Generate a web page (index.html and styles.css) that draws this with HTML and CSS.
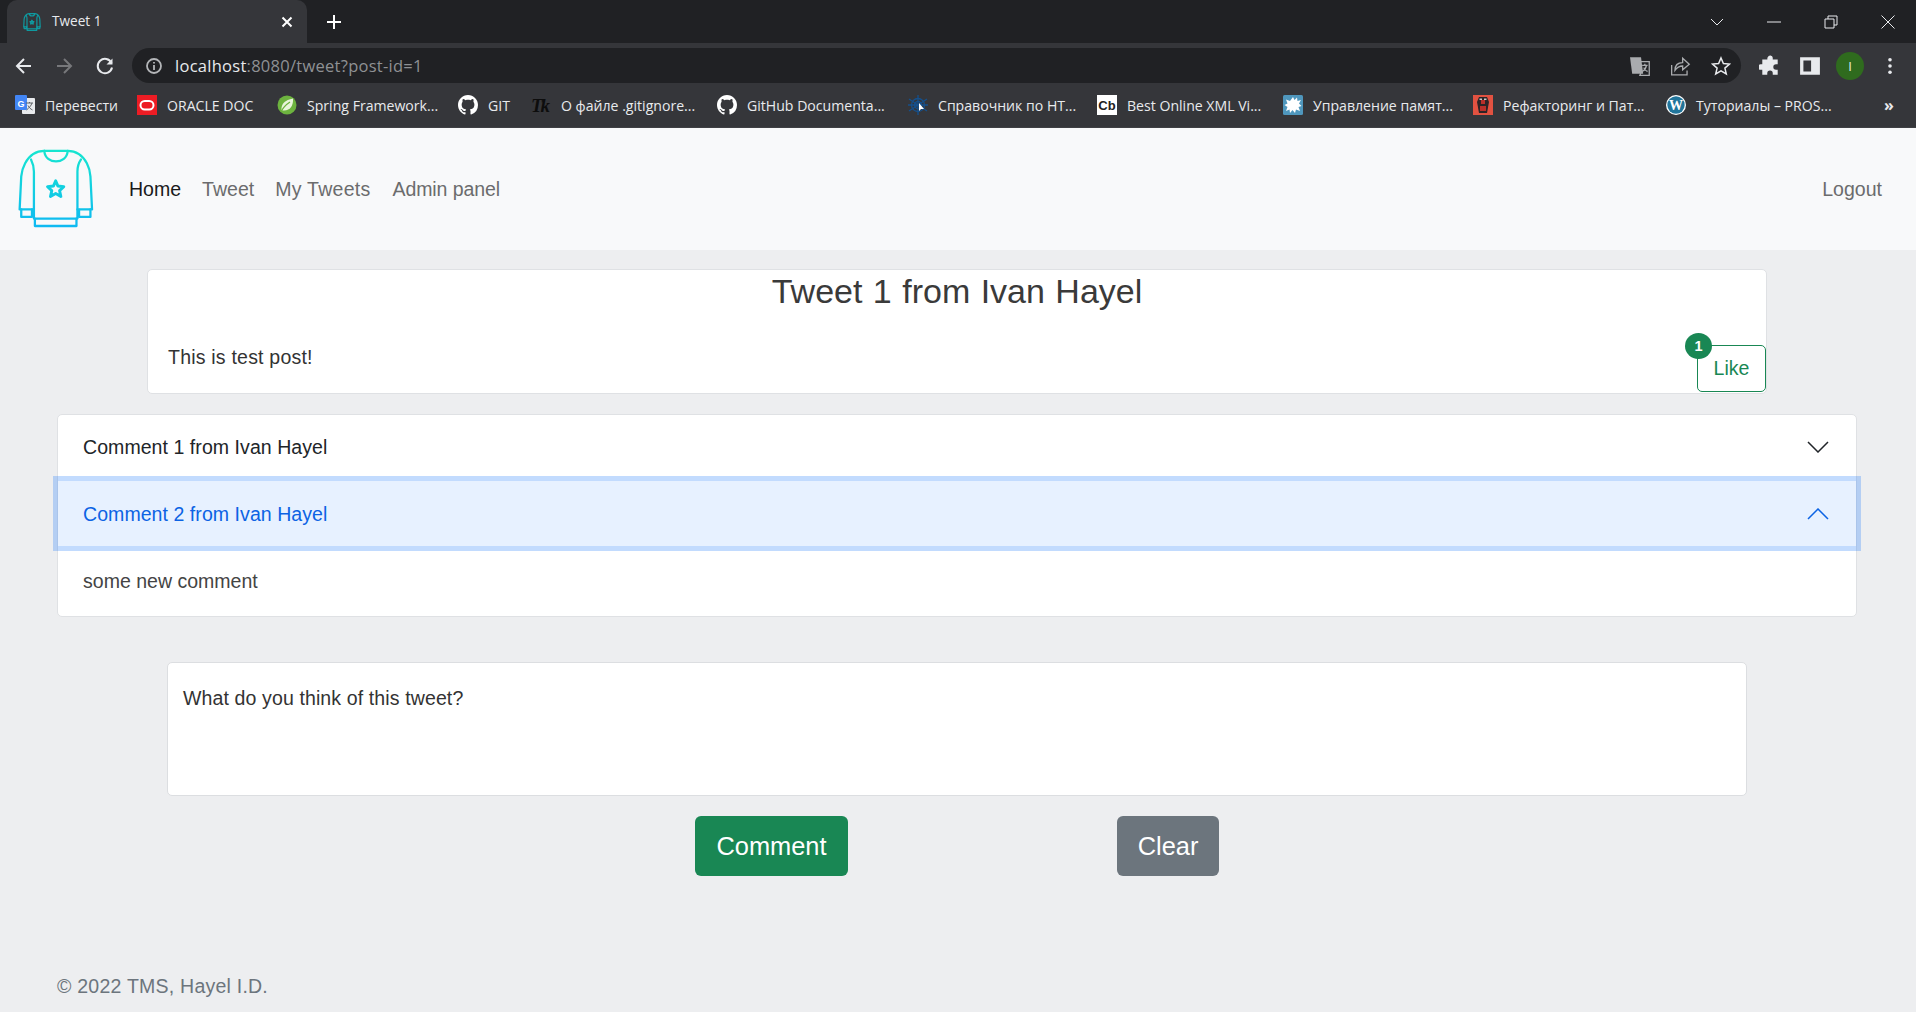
FILE: index.html
```html
<!DOCTYPE html>
<html lang="en">
<head>
<meta charset="utf-8">
<title>Tweet 1</title>
<link rel="stylesheet" href="styles.css">
</head>
<body>
<svg class="defs" width="0" height="0" aria-hidden="true">
  <defs>
    <linearGradient id="sweaterGrad" gradientUnits="userSpaceOnUse" x1="0" y1="55" x2="0" y2="297">
      <stop offset="0" stop-color="#16e6cf"/>
      <stop offset="1" stop-color="#0fb9f2"/>
    </linearGradient>
    <symbol id="sweater" viewBox="52 54 234 244">
      <g fill="none" stroke-linejoin="round" stroke-linecap="round">
        <path d="M133 62H205C235 62 252 78 264 100C272 115 274 128 275 140L280 242H243"/>
        <path d="M133 62C103 62 86 78 74 100C66 115 63 128 62 140L57 242H95"/>
        <path d="M133 62C136 105 202 105 205 62"/>
        <path d="M92 88C98 100 101 112 101 125V270H235V125C235 112 238 100 246 88"/>
        <path d="M62 242V265H95M101 242H95V265M275 242V265H240M235 242H240V265"/>
        <path d="M104 270V293H232V270"/>
        <path class="star" d="M168 154L175 170L193 172L180 184L184 202L168 193L152 202L156 184L143 172L161 170Z"/>
      </g>
    </symbol>
    <symbol id="octo" viewBox="0 0 16 16">
      <path fill="#fff" d="M8 0C3.58 0 0 3.58 0 8c0 3.54 2.29 6.53 5.47 7.59.4.07.55-.17.55-.38 0-.19-.01-.82-.01-1.49-2.01.37-2.53-.49-2.69-.94-.09-.23-.48-.94-.82-1.13-.28-.15-.68-.52-.01-.53.63-.01 1.08.58 1.23.82.72 1.21 1.87.87 2.33.66.07-.52.28-.87.51-1.07-1.78-.2-3.64-.89-3.64-3.95 0-.87.31-1.59.82-2.15-.08-.2-.36-1.02.08-2.12 0 0 .67-.21 2.2.82.64-.18 1.32-.27 2-.27.68 0 1.36.09 2 .27 1.53-1.04 2.2-.82 2.2-.82.44 1.1.16 1.92.08 2.12.51.56.82 1.27.82 2.15 0 3.07-1.87 3.75-3.65 3.95.29.25.54.73.54 1.48 0 1.07-.01 1.93-.01 2.2 0 .21.15.46.55.38A8.013 8.013 0 0016 8c0-4.42-3.58-8-8-8z"/>
    </symbol>
  </defs>
</svg>

<header class="browser">
  <div class="tabstrip">
    <div class="tab">
      <svg class="favicon" viewBox="0 0 18 18" stroke="#0f9aa0"><use href="#sweater"/></svg>
      <span class="tab-title">Tweet 1</span>
      <svg class="tab-close" viewBox="0 0 12 12"><path d="M1.5 1.5L10.5 10.5M10.5 1.5L1.5 10.5"/></svg>
    </div>
    <svg class="newtab" viewBox="0 0 16 16"><path d="M8 1V15M1 8H15"/></svg>
    <div class="winctl">
      <svg class="win" viewBox="0 0 16 16"><path d="M2 5L8 11L14 5"/></svg>
      <svg class="win" viewBox="0 0 16 16"><path d="M1 8H15"/></svg>
      <svg class="win" viewBox="0 0 16 16"><path d="M2 5H11V14H2ZM5 5V2H14V11H11"/></svg>
      <svg class="win" viewBox="0 0 16 16"><path d="M1.5 1.5L14.5 14.5M14.5 1.5L1.5 14.5"/></svg>
    </div>
  </div>
  <div class="toolbar">
    <div class="navbtns">
      <span class="tbtn"><svg class="ico" viewBox="0 0 20 20"><path d="M17 10H3.5M10 3L3 10L10 17"/></svg></span>
      <span class="tbtn"><svg class="ico dim" viewBox="0 0 20 20"><path d="M3 10H16.5M10 3L17 10L10 17"/></svg></span>
      <span class="tbtn"><svg class="ico" viewBox="-1 0 20 20"><path d="M16.5 7A7.2 7.2 0 1 0 17 11.5"/><path class="solid" d="M17.5 2.5V8.5H11.5Z"/></svg></span>
    </div>
    <div class="omnibox">
      <svg class="info" viewBox="0 0 20 20"><circle cx="10" cy="10" r="7"/><path d="M10 9V14M10 6V7.5"/></svg>
      <span class="url"><span class="url-host">localhost</span>:8080/tweet?post-id=1</span>
      <div class="omni-actions">
        <span class="tbtn"><svg class="ico-thin" viewBox="1 0 20 20"><path class="grey" d="M1 2H11L13 17H3Z"/><path d="M9 6H18.5V18.5H10L11 16"/><path d="M12 9.5H17M14.5 8V9.5M16 9.5C15.5 12 14 14 12 15M13.5 11.5C14 13 15.5 14.5 17 15"/></svg></span>
        <span class="tbtn"><svg class="ico-thin" viewBox="1.500 0 20 20"><path d="M3 9V18H17V14"/><path d="M6 14C6 9 9 7 13 7V3L19 8.5L13 13.5V10C10 10 8 11 6 14Z"/></svg></span>
        <span class="tbtn"><svg class="ico star-ico" viewBox="0 0 20 20"><path d="M10 2L12.4 7.6L18.5 8.1L13.9 12.1L15.3 18L10 14.9L4.7 18L6.1 12.1L1.5 8.1L7.6 7.6Z"/></svg></span>
      </div>
    </div>
    <div class="tool-right">
      <span class="tbtn"><svg class="ico-fill" viewBox="0 0 20 20"><path d="M8 2A2.3 2.3 0 0 1 12.500 2.500V4H17V8.500H15.500A2.500 2.500 0 0 0 15.500 13.500H17V18H12.500V16.500A2.500 2.500 0 0 0 7.500 16.500V18H3V13.500H1.500A2.500 2.500 0 0 1 1.500 8.500H3V4H7.600V2.500Z"/></svg></span>
      <span class="tbtn"><svg class="ico-fill" viewBox="0 0 20 20"><path fill-rule="evenodd" d="M1 2H19V18H1ZM4 5V15H11V5Z"/></svg></span>
      <span class="tbtn"><span class="avatar">I</span></span>
      <span class="tbtn"><svg class="ico-fill dots" viewBox="0 0 20 20"><circle cx="10" cy="3" r="2"/><circle cx="10" cy="10" r="2"/><circle cx="10" cy="17" r="2"/></svg></span>
    </div>
  </div>
  <nav class="bookmarks">
    <a class="bm b1">
      <svg class="bm-ico" viewBox="0 0 20 20"><rect x="7" y="3" width="13" height="16" rx="1" fill="#e8eaed"/><rect x="0" y="0" width="12" height="15" rx="1" fill="#4285f4"/><text x="6" y="11.500" class="ic-g">G</text><path d="M11 8H18M14.500 7V8M17 8C16 11 14 13 11.500 15M13 10.500C14 12.500 15.500 14 17.500 15" stroke="#5f6368" fill="none"/></svg>
      <span>Перевести</span></a>
    <a class="bm b2">
      <svg class="bm-ico" viewBox="0 0 20 20"><rect width="20" height="20" fill="#ed1c24"/><rect x="3.500" y="6" width="13" height="8.500" rx="4.250" fill="none" stroke="#fff" stroke-width="2"/></svg>
      <span>ORACLE DOC</span></a>
    <a class="bm b3">
      <svg class="bm-ico" viewBox="0 0 20 20"><circle cx="10" cy="10" r="9.500" fill="#6db33f"/><path d="M4.500 15C4 9 8 5 16 3.500C16.500 10 13.500 15.500 7 15.500C6 15.500 5 15.500 4.500 15Z" fill="#e9f5dc"/><path d="M4.500 16C7 11 10 9 13 7" stroke="#6db33f" stroke-width="1.300" fill="none"/></svg>
      <span>Spring Framework...</span></a>
    <a class="bm b4"><svg class="bm-ico" viewBox="0 0 16 16"><use href="#octo"/></svg><span>GIT</span></a>
    <a class="bm b5">
      <svg class="bm-ico" viewBox="0 0 20 20"><text x="0" y="17" class="ic-tk">Tk</text></svg>
      <span>О файле .gitignore...</span></a>
    <a class="bm b6"><svg class="bm-ico" viewBox="0 0 16 16"><use href="#octo"/></svg><span>GitHub Documenta...</span></a>
    <a class="bm b7">
      <svg class="bm-ico" viewBox="0 0 20 20"><g stroke="#15508c" stroke-width="1.300" fill="none"><path d="M10 0V20M1 4L19 16M19 4L1 16M0 10H20"/><circle cx="10" cy="10" r="3.500"/><circle cx="10" cy="10" r="6.500"/></g><path d="M11 8L11 16L13 14H16Z" fill="#fff"/></svg>
      <span>Справочник по HT...</span></a>
    <a class="bm b8">
      <svg class="bm-ico" viewBox="0 0 20 20"><rect width="20" height="20" fill="#fff"/><text x="10" y="14.500" class="ic-cb">Cb</text></svg>
      <span>Best Online XML Vi...</span></a>
    <a class="bm b9">
      <svg class="bm-ico" viewBox="0 0 20 20"><rect width="20" height="20" rx="1.500" fill="#4f97bd"/><path d="M10 2L11.500 5L14 2.500L14.500 6L18 5L16 8.500L18.500 11L15.500 12L17 16L13 14.500L12 18L9.500 15L7 18L6.500 14.500L3 16L4.500 12L1.500 10L4.500 8.500L3 4.500L7 6Z" fill="#fff"/></svg>
      <span>Управление памят...</span></a>
    <a class="bm b10">
      <svg class="bm-ico" viewBox="0 0 20 20"><rect width="20" height="20" fill="#e25241"/><path d="M6 2H14L16 7L14 18H6L4 7Z" fill="#2d2426"/><path d="M8 5H12V9H8ZM7 11H13V16H7Z" fill="#b9302a"/><path d="M6.500 3.500H9V5H6.500ZM11 3.500H13.500V5H11Z" fill="#ccc"/></svg>
      <span>Рефакторинг и Пат...</span></a>
    <a class="bm b11">
      <svg class="bm-ico" viewBox="0 0 20 20"><circle cx="10" cy="10" r="10" fill="#fff"/><circle cx="10" cy="10" r="8.700" fill="#21759b"/><text x="10" y="15" class="ic-wp">W</text></svg>
      <span>Туториалы – PROS...</span></a>
    <span class="bm-more">»</span>
  </nav>
</header>

<div class="navbar">
  <svg class="brand" viewBox="0 0 76 80" stroke="url(#sweaterGrad)"><use href="#sweater"/></svg>
  <a class="nav-link active">Home</a>
  <a class="nav-link">Tweet</a>
  <a class="nav-link link-tweets">My Tweets</a>
  <a class="nav-link link-admin">Admin panel</a>
  <a class="nav-link logout">Logout</a>
</div>

<main class="container">
  <section class="tweet-card">
    <h1 class="tweet-title">Tweet 1 from Ivan Hayel</h1>
    <div class="tweet-row">
      <p class="tweet-text">This is test post!</p>
      <button class="like-btn">Like<span class="badge">1</span></button>
    </div>
  </section>

  <section class="accordion">
    <div class="acc-header">
      <span>Comment 1 from Ivan Hayel</span>
      <svg class="chev" viewBox="0 0 22 12"><path d="M1 1L11 11L21 1"/></svg>
    </div>
    <div class="acc-header open">
      <span>Comment 2 from Ivan Hayel</span>
      <svg class="chev" viewBox="0 0 22 12"><path d="M1 11L11 1L21 11"/></svg>
    </div>
    <div class="acc-body">some new comment</div>
  </section>

  <textarea class="comment-box" placeholder="What do you think of this tweet?"></textarea>

  <div class="actions">
    <button class="btn btn-green">Comment</button>
    <button class="btn btn-grey">Clear</button>
  </div>

  <footer class="footer">© 2022 TMS, Hayel I.D.</footer>
</main>
</body>
</html>
```
FILE: styles.css
```css
* { box-sizing: border-box; }
html, body { margin: 0; padding: 0; }
body {
  width: 1916px;
  height: 1012px;
  overflow: hidden;
  background: #edeef0;
  font-family: "Liberation Sans", Arial, sans-serif;
  font-size: 19.55px;
  color: #212529;
}
.defs { position: absolute; }

/* browser chrome */
.browser { font-family: "Open Sans", "Noto Sans", sans-serif; color: #e8eaed; }
.tabstrip { height: 43px; background: #202124; display: flex; align-items: center; }
.tab {
  width: 300px; height: 43px; margin-left: 7px;
  background: #35363a; border-radius: 10px 10px 0 0;
  display: flex; align-items: center; padding-left: 16px;
}
.favicon { width: 18px; height: 18px; flex: none; stroke-width: 16; --star-w: 20; }
.tab-title { margin-left: 11px; margin-top: -2px; font-size: 13.600px; flex: 1; }
.tab-close { width: 12px; height: 12px; margin-right: 14px; fill: none; stroke: #fff; stroke-width: 2; }
.newtab { width: 16px; height: 16px; margin-left: 19px; fill: none; stroke: #fff; stroke-width: 2; }
.winctl { margin-left: auto; display: flex; gap: 41px; padding-right: 20px; }
.win { width: 16px; height: 16px; fill: none; stroke: #e8eaed; stroke-width: 1; }

.toolbar { height: 40px; padding-top: 5px; background: #35363a; display: flex; align-items: stretch; }
.navbtns { display: flex; margin-left: 4px; width: 122px; }
.tbtn { width: 40px; display: flex; align-items: center; justify-content: center; flex: none; }
.ico { width: 20px; height: 20px; fill: none; stroke: #e8eaed; stroke-width: 2; }
.ico.dim { stroke: #77787b; }
.ico.star-ico { stroke-width: 1.500; }
.solid { fill: #e8eaed; stroke: none; }
.ico-thin { width: 22px; height: 22px; fill: none; stroke: #a9abae; stroke-width: 1.200; }
.grey { fill: #a9abae; stroke: none; }
.ico-fill { width: 22px; height: 22px; fill: #e8eaed; }
.ico-fill.dots { width: 18px; height: 18px; }
.omnibox {
  width: 1609px; margin-left: 6px; height: 35px;
  background: #202124; border-radius: 18px;
  display: flex; align-items: center; padding-left: 12px;
}
.info { width: 20px; height: 20px; fill: none; stroke: #b4b6b9; stroke-width: 1.800; flex: none; }
.url { margin-left: 11px; font-size: 16.500px; color: #8f9194; letter-spacing: 0.270px; }
.url-host { color: #e8eaed; }
.omni-actions { margin-left: auto; display: flex; }
.tool-right { display: flex; margin-left: 9px; }
.avatar {
  width: 28px; height: 28px; border-radius: 50%;
  background: #2f6b1e; color: #e8eaed; font-size: 13px;
  display: flex; align-items: center; justify-content: center;
}

.bookmarks { height: 45px; background: #35363a; display: flex; align-items: center; padding-left: 15px; font-size: 14.100px; border-bottom: 1px solid #3f4044; }
.bm { display: flex; align-items: center; gap: 10px; white-space: nowrap; flex: none; }
.bm-ico { width: 20px; height: 20px; flex: none; overflow: hidden; }
.b1 { width: 122px; } .b2 { width: 140px; } .b3 { width: 181px; } .b4 { width: 73px; }
.b5 { width: 186px; } .b6 { width: 191px; } .b7 { width: 189px; } .b8 { width: 186px; }
.b9 { width: 190px; } .b10 { width: 193px; } .b11 { width: 219px; }
.bm-more { font-size: 16px; font-weight: 700; margin-left: -1px; }
.ic-g { font: 700 9px "Liberation Sans", sans-serif; fill: #fff; text-anchor: middle; }
.ic-tk { font: italic 700 19px "Liberation Serif", serif; fill: #0d0d0d; letter-spacing: -2px; }
.ic-cb { font: 700 13px "Liberation Sans", sans-serif; fill: #222; text-anchor: middle; }
.ic-wp { font: 700 14px "Liberation Serif", serif; fill: #fff; text-anchor: middle; }

/* navbar */
.navbar {
  height: 122px; background: #f8f9fa;
  display: flex; align-items: center; padding: 0 34px 0 18px; gap: 21px;
}
.brand { width: 76px; height: 80px; margin-right: 14px; margin-top: -2px; stroke-width: 7; --star-w: 9; }
.star { stroke-width: var(--star-w); }
.nav-link { color: #6b6c6d; }
.nav-link.active { color: #1a1a1a; }
.link-tweets { letter-spacing: .25px; }
.link-admin { letter-spacing: -.1px; margin-left: 1px; }
.logout { margin-left: auto; }

/* content */
.container { width: 1800px; margin-left: 57px; }
.tweet-card {
  width: 1620px; height: 125px; margin: 19px auto 0;
  background: #fff; border: 1px solid #dfe1e4; border-radius: 5px;
}
.tweet-title { margin: 0; height: 43px; font-size: 34px; line-height: 43px; font-weight: 400; text-align: center; color: #3a3a3a; letter-spacing: 0; word-spacing: 1px; }
.tweet-row { margin-top: 32px; padding-left: 20px; display: flex; justify-content: space-between; align-items: flex-start; }
.tweet-text { margin: 1px 0 0; line-height: 23px; color: #333; letter-spacing: .2px; }
.like-btn {
  position: relative; width: 69px; height: 47px;
  background: #fff; border: 1px solid #198754; border-radius: 5px;
  color: #198754; font: inherit; padding: 0;
}
.badge {
  position: absolute; left: -13px; top: -13px;
  width: 27px; height: 26px; border-radius: 50%;
  background: #198754; color: #fff; font-size: 14.500px; font-weight: 700;
  display: flex; align-items: center; justify-content: center;
}

.accordion {
  margin-top: 20px; height: 203px;
  background: #fff; border: 1px solid #dfe1e4; border-radius: 5px;
}
.acc-header {
  height: 65px; padding: 0 27px 0 25px;
  display: flex; align-items: center; justify-content: space-between;
  color: #212529; position: relative; letter-spacing: .05px;
}
.acc-header.open {
  margin-top: 1px; padding-top: 1px;
  background: #e7f1ff; color: #0c63e4;
  box-shadow: 0 0 0 5px rgba(13, 110, 253, .25);
}
.chev { width: 22px; height: 12px; fill: none; stroke: #212529; stroke-width: 1.500; margin-top: -1px; }
.open .chev { stroke: #0c63e4; }
.acc-body { height: 70px; padding-left: 25px; display: flex; align-items: center; color: #444; }

.comment-box {
  display: block; width: 1580px; height: 134px; margin: 45px auto 0;
  padding: 21px 15px; border: 1px solid #dcdee1; border-radius: 5px;
  background: #fff; font: inherit; line-height: 29px; resize: none; outline: none; letter-spacing: .11px;
}
.comment-box::placeholder { color: #333; opacity: 1; }
.actions { margin-top: 20px; display: flex; justify-content: center; gap: 269px; }
.btn { height: 60px; border: 0; border-radius: 6px; color: #fff; font: 25.400px "Liberation Sans", sans-serif; padding: 0; }
.btn-green { width: 153px; background: #198754; }
.btn-grey { width: 102px; background: #6c757d; }
.footer { margin-top: 99px; line-height: 23px; color: #6c757d; letter-spacing: .22px; }
```
